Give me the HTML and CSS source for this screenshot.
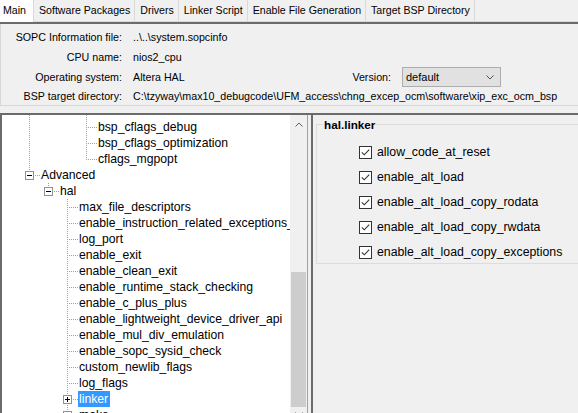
FILE: index.html
```html
<!DOCTYPE html>
<html>
<head>
<meta charset="utf-8">
<link rel="stylesheet" href="styles.css">
</head>
<body>
<div class="tabs">
  <div class="tab active">Main</div>
  <div class="tab">Software Packages</div>
  <div class="tab">Drivers</div>
  <div class="tab">Linker Script</div>
  <div class="tab">Enable File Generation</div>
  <div class="tab last">Target BSP Directory</div>
  <div class="tabs-rest"></div>
</div>

<div class="info">
  <div class="irow"><span class="ilabel">SOPC Information file:</span><span class="ivalue">..\..\system.sopcinfo</span></div>
  <div class="irow"><span class="ilabel">CPU name:</span><span class="ivalue">nios2_cpu</span></div>
  <div class="irow"><span class="ilabel">Operating system:</span><span class="ivalue short">Altera HAL</span><span class="vlabel">Version:</span>
    <div class="select"><span>default</span><svg class="chev" width="8" height="5" viewBox="0 0 8 5"><path d="M0.5 0.5L4 4L7.5 0.5" fill="none" stroke="#555" stroke-width="1"/></svg></div>
  </div>
  <div class="irow lastrow"><span class="ilabel">BSP target directory:</span><span class="ivalue">C:\tzyway\max10_debugcode\UFM_access\chng_excep_ocm\software\xip_exc_ocm_bsp</span></div>
</div>

<div class="main">
  <div class="treepane">
    <div class="tree">
      <div class="row spacer"><i class="c"></i><i class="c v"></i><i class="c"></i><i class="c"></i><i class="c v"></i></div>
      <div class="row"><i class="c"></i><i class="c v"></i><i class="c"></i><i class="c"></i><i class="c t"></i><span class="lbl">bsp_cflags_debug</span></div>
      <div class="row"><i class="c"></i><i class="c v"></i><i class="c"></i><i class="c"></i><i class="c t"></i><span class="lbl">bsp_cflags_optimization</span></div>
      <div class="row"><i class="c"></i><i class="c v"></i><i class="c"></i><i class="c"></i><i class="c l"></i><span class="lbl">cflags_mgpopt</span></div>
      <div class="row"><i class="c"></i><i class="c l"><svg class="box" width="9" height="9" viewBox="0 0 9 9"><rect x="0.5" y="0.5" width="8" height="8" fill="#fff" stroke="#919191"/><path d="M2 4.5h5" stroke="#000"/></svg></i><span class="lbl">Advanced</span></div>
      <div class="row"><i class="c"></i><i class="c"></i><i class="c l"><svg class="box" width="9" height="9" viewBox="0 0 9 9"><rect x="0.5" y="0.5" width="8" height="8" fill="#fff" stroke="#919191"/><path d="M2 4.5h5" stroke="#000"/></svg></i><span class="lbl">hal</span></div>
      <div class="row"><i class="c"></i><i class="c"></i><i class="c"></i><i class="c t"></i><span class="lbl">max_file_descriptors</span></div>
      <div class="row"><i class="c"></i><i class="c"></i><i class="c"></i><i class="c t"></i><span class="lbl">enable_instruction_related_exceptions_api</span></div>
      <div class="row"><i class="c"></i><i class="c"></i><i class="c"></i><i class="c t"></i><span class="lbl">log_port</span></div>
      <div class="row"><i class="c"></i><i class="c"></i><i class="c"></i><i class="c t"></i><span class="lbl">enable_exit</span></div>
      <div class="row"><i class="c"></i><i class="c"></i><i class="c"></i><i class="c t"></i><span class="lbl">enable_clean_exit</span></div>
      <div class="row"><i class="c"></i><i class="c"></i><i class="c"></i><i class="c t"></i><span class="lbl">enable_runtime_stack_checking</span></div>
      <div class="row"><i class="c"></i><i class="c"></i><i class="c"></i><i class="c t"></i><span class="lbl">enable_c_plus_plus</span></div>
      <div class="row"><i class="c"></i><i class="c"></i><i class="c"></i><i class="c t"></i><span class="lbl">enable_lightweight_device_driver_api</span></div>
      <div class="row"><i class="c"></i><i class="c"></i><i class="c"></i><i class="c t"></i><span class="lbl">enable_mul_div_emulation</span></div>
      <div class="row"><i class="c"></i><i class="c"></i><i class="c"></i><i class="c t"></i><span class="lbl">enable_sopc_sysid_check</span></div>
      <div class="row"><i class="c"></i><i class="c"></i><i class="c"></i><i class="c t"></i><span class="lbl">custom_newlib_flags</span></div>
      <div class="row"><i class="c"></i><i class="c"></i><i class="c"></i><i class="c t"></i><span class="lbl">log_flags</span></div>
      <div class="row"><i class="c"></i><i class="c"></i><i class="c"></i><i class="c t"><svg class="box" width="9" height="9" viewBox="0 0 9 9"><rect x="0.5" y="0.5" width="8" height="8" fill="#fff" stroke="#919191"/><path d="M2 4.5h5M4.5 2v5" stroke="#000"/></svg></i><span class="lbl sel">linker</span></div>
      <div class="row"><i class="c"></i><i class="c"></i><i class="c"></i><i class="c t"><svg class="box" width="9" height="9" viewBox="0 0 9 9"><rect x="0.5" y="0.5" width="8" height="8" fill="#fff" stroke="#919191"/><path d="M2 4.5h5M4.5 2v5" stroke="#000"/></svg></i><span class="lbl">make</span></div>
    </div>
    <div class="sb">
      <div class="sbbtn up"><svg width="8" height="5" viewBox="0 0 8 5"><path d="M0.5 4.5L4 1L7.5 4.5" fill="none" stroke="#606060"/></svg></div>
      <div class="sbtrack"></div>
      <div class="sbthumb"></div>
      <div class="sbbtn down"><svg width="8" height="5" viewBox="0 0 8 5"><path d="M0.5 0.5L4 4L7.5 0.5" fill="none" stroke="#606060"/></svg></div>
    </div>
  </div>
  <div class="sash"></div>
  <div class="rightpane">
    <fieldset class="group">
      <legend>hal.linker</legend>
      <div class="checks">
        <div class="chk"><svg width="13" height="13" viewBox="0 0 13 13"><rect x="0.5" y="0.5" width="12" height="12" fill="#fff" stroke="#333"/><path d="M2.8 6.3L5.3 8.8L10.2 3.6" fill="none" stroke="#333" stroke-width="1.1"/></svg><span>allow_code_at_reset</span></div>
        <div class="chk"><svg width="13" height="13" viewBox="0 0 13 13"><rect x="0.5" y="0.5" width="12" height="12" fill="#fff" stroke="#333"/><path d="M2.8 6.3L5.3 8.8L10.2 3.6" fill="none" stroke="#333" stroke-width="1.1"/></svg><span>enable_alt_load</span></div>
        <div class="chk"><svg width="13" height="13" viewBox="0 0 13 13"><rect x="0.5" y="0.5" width="12" height="12" fill="#fff" stroke="#333"/><path d="M2.8 6.3L5.3 8.8L10.2 3.6" fill="none" stroke="#333" stroke-width="1.1"/></svg><span>enable_alt_load_copy_rodata</span></div>
        <div class="chk"><svg width="13" height="13" viewBox="0 0 13 13"><rect x="0.5" y="0.5" width="12" height="12" fill="#fff" stroke="#333"/><path d="M2.8 6.3L5.3 8.8L10.2 3.6" fill="none" stroke="#333" stroke-width="1.1"/></svg><span>enable_alt_load_copy_rwdata</span></div>
        <div class="chk"><svg width="13" height="13" viewBox="0 0 13 13"><rect x="0.5" y="0.5" width="12" height="12" fill="#fff" stroke="#333"/><path d="M2.8 6.3L5.3 8.8L10.2 3.6" fill="none" stroke="#333" stroke-width="1.1"/></svg><span>enable_alt_load_copy_exceptions</span></div>
      </div>
    </fieldset>
  </div>
</div>
</body>
</html>
```
FILE: styles.css
```css
* { box-sizing: border-box; }
html, body { margin: 0; padding: 0; }
body {
  width: 578px;
  height: 413px;
  overflow: hidden;
  background: #f0f0f0;
  font-family: "Liberation Sans", Arial, sans-serif;
  color: #000;
}

/* tabs */
.tabs {
  display: flex;
  height: 24px;
  border-bottom: 2px solid #6b6b6b;
}
.tab {
  height: 22px;
  line-height: 21px;
  font-size: 10.6px;
  padding: 0 4px 0 5px;
  border-left: 1px solid #d9d9d9;
  border-bottom: 1px solid #d9d9d9;
  white-space: nowrap;
}
.tab.last { border-right: 1px solid #d9d9d9; }
.tab.active {
  width: 33px;
  padding-left: 3px;
  background: #fff;
  border-left: none;
  border-bottom: none;
}
.tabs-rest { flex: 1; border-bottom: 1px solid #d9d9d9; }

/* info */
.info {
  height: 82px;
  padding-top: 3px;
  margin-bottom: 7px;
  border-left: 1px solid #d7d7d7;
  border-bottom: 1px solid #d7d7d7;
  font-size: 10.7px;
}
.irow {
  display: flex;
  align-items: center;
  height: 20px;
  white-space: nowrap;
}
.irow.lastrow { height: 18px; }
.ilabel {
  width: 121px;
  margin-right: 11px;
  text-align: right;
  flex: none;
}
.ivalue.short { width: 200px; flex: none; }
.vlabel { width: 58px; text-align: right; margin-right: 11px; flex: none; }
.select {
  width: 99px;
  height: 20px;
  border: 1px solid #adadad;
  background: #e1e1e1;
  display: flex;
  align-items: center;
  justify-content: space-between;
  padding: 0 6px 0 3px;
  font-size: 11px;
}

/* main area */
.main {
  display: flex;
  height: 300px;
  border-top: 2px solid #6b6b6b;
  overflow: hidden;
}
.treepane {
  display: flex;
  flex: none;
  width: 308px;
  background: #fff;
  border-left: 2px solid #6b6b6b;
  border-right: 1px solid #a0a0a0;
}
.tree {
  width: 288px;
  flex: none;
  overflow: hidden;
  font-size: 12.2px;
}
.row {
  display: flex;
  height: 16px;
  line-height: 16px;
  white-space: nowrap;
}
.row.spacer { height: 4px; }
.c {
  display: flex;
  align-items: flex-start;
  flex: none;
  width: 19px;
  height: 100%;
  padding: 4px 0 0 4px;
}
.v {
  background: repeating-linear-gradient(to bottom, #a0a0a0 0 1px, transparent 1px 2px) 8px 0 / 1px 100% no-repeat;
}
.t {
  background:
    repeating-linear-gradient(to bottom, #a0a0a0 0 1px, transparent 1px 2px) 8px 0 / 1px 100% no-repeat,
    repeating-linear-gradient(to right, #a0a0a0 0 1px, transparent 1px 2px) 10px 8px / 9px 1px no-repeat;
}
.l {
  background:
    repeating-linear-gradient(to bottom, #a0a0a0 0 1px, transparent 1px 2px) 8px 0 / 1px 9px no-repeat,
    repeating-linear-gradient(to right, #a0a0a0 0 1px, transparent 1px 2px) 10px 8px / 9px 1px no-repeat;
}
.box { display: block; flex: none; }
.lbl { padding: 0 2px 0 1px; }
.lbl.sel { background: #3399ff; color: #fff; }

/* scrollbar */
.sb {
  width: 17px;
  flex: none;
  background: #f0f0f0;
  display: flex;
  flex-direction: column;
}
.sbbtn {
  height: 17px;
  flex: none;
  display: flex;
  justify-content: center;
  align-items: flex-start;
  padding-top: 7px;
}
.sbbtn.down { padding-top: 5px; }
.sbbtn svg { display: block; }
.sbtrack { height: 140px; flex: none; }
.sbthumb { height: 135px; flex: none; margin: 0 1px; background: #cdcdcd; }

.sash { width: 3px; flex: none; }

/* right pane */
.rightpane {
  flex: 1;
  min-width: 0;
  overflow: hidden;
  border-left: 2px solid #6b6b6b;
  padding: 1px 0 0 3px;
}
.group {
  margin: 0;
  padding: 0;
  min-width: 0;
  width: calc(100% + 20px);
  border: 1px solid #dcdcdc;
}
.group legend {
  margin-left: 6px;
  padding: 2px 1px 0;
  font-weight: bold;
  font-size: 11.7px;
  line-height: 14px;
}
.checks {
  display: flex;
  flex-direction: column;
  gap: 3px;
  padding: 9px 0 0 42px;
}
.chk {
  display: flex;
  align-items: center;
  gap: 5px;
  height: 22px;
  font-size: 12.3px;
  white-space: nowrap;
}
.chk svg { display: block; flex: none; }
```
